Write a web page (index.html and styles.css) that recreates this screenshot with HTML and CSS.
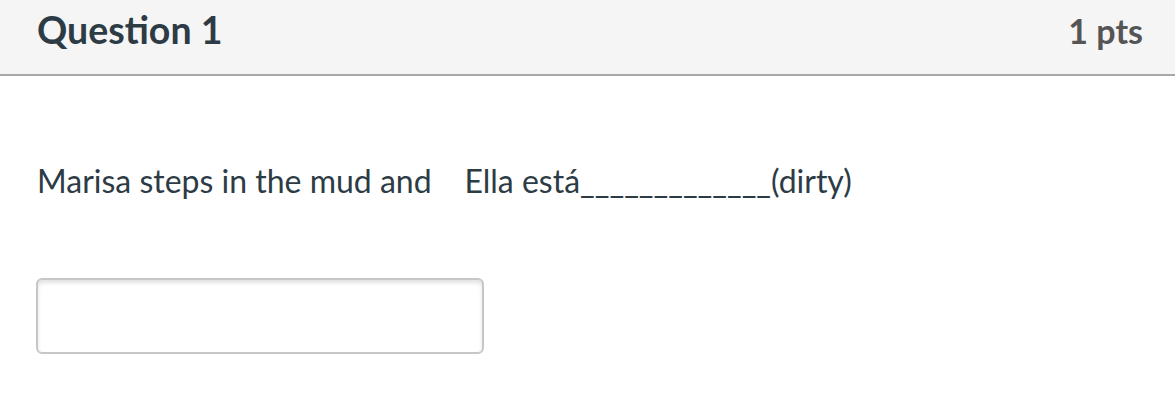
FILE: index.html
```html
<!DOCTYPE html>
<html>
<head>
<meta charset="utf-8">
<link rel="stylesheet" href="styles.css">
</head>
<body>
<div class="question">
  <div class="header">
    <h2 class="title">Question 1</h2>
    <div class="points">1 pts</div>
  </div>
  <div class="content">
    <p class="text">Marisa steps in the mud and&nbsp;&nbsp;&nbsp; Ella está_____________(dirty)</p>
    <input class="answer" type="text">
  </div>
</div>
</body>
</html>
```
FILE: styles.css
```css
html, body {
  margin: 0;
  padding: 0;
  background: #ffffff;
}
body {
  font-family: Lato, "Liberation Sans", sans-serif;
  color: #2d3b45;
}
.header {
  height: 74px;
  background: #f5f5f5;
  border-bottom: 2px solid #a8a8a8;
  display: flex;
  align-items: center;
  justify-content: space-between;
  padding: 0 32px 0 37px;
  box-sizing: content-box;
}
.title {
  margin: 0;
  font-size: 37.5px;
  font-weight: 700;
  color: #2d3b45;
  line-height: 1;
  padding-bottom: 14px;
}
.points {
  font-size: 34px;
  font-weight: 700;
  color: #555555;
  line-height: 1;
  padding-bottom: 12px;
}
.content {
  padding: 0 37px;
}
.text {
  margin: 85px 0 0 0;
  font-size: 32px;
  line-height: 40px;
}
.answer {
  display: block;
  margin-top: 77px;
  width: 448px;
  height: 76px;
  box-sizing: border-box;
  margin-left: -1px;
  border: 2px solid #c7c7c7;
  border-radius: 6px;
  box-shadow: inset 0 3px 4px rgba(0,0,0,0.12);
  background: #fff;
  outline: none;
}
```
